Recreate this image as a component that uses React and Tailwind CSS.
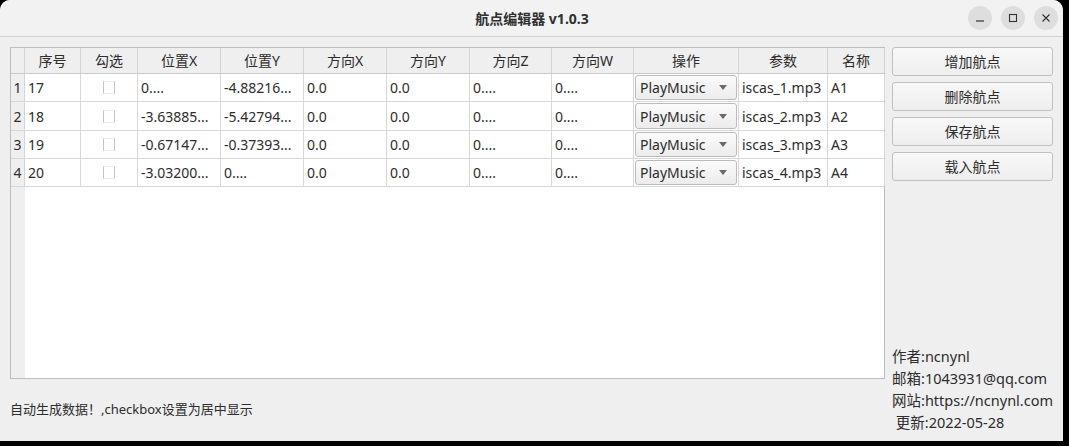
const font = { fontFamily: '"Noto Sans", "Noto Sans CJK SC", sans-serif' }

const cols = [
  { key: 'id', title: '序号', w: 'w-[56px]' },
  { key: 'check', title: '勾选', w: 'w-[57px]' },
  { key: 'px', title: '位置X', w: 'w-[83px]' },
  { key: 'py', title: '位置Y', w: 'w-[83px]' },
  { key: 'ox', title: '方向X', w: 'w-[83px]' },
  { key: 'oy', title: '方向Y', w: 'w-[83px]' },
  { key: 'oz', title: '方向Z', w: 'w-[82px]' },
  { key: 'ow', title: '方向W', w: 'w-[82px]' },
  { key: 'op', title: '操作', w: 'w-[105px]' },
  { key: 'arg', title: '参数', w: 'w-[89px]' },
  { key: 'name', title: '名称', w: 'w-[57px]' },
]

const rows = [
  { h: 'h-[28px]', id: '17', px: '0....', py: '-4.88216...', ox: '0.0', oy: '0.0', oz: '0....', ow: '0....', arg: 'iscas_1.mp3', name: 'A1' },
  { h: 'h-[29px]', id: '18', px: '-3.63885...', py: '-5.42794...', ox: '0.0', oy: '0.0', oz: '0....', ow: '0....', arg: 'iscas_2.mp3', name: 'A2' },
  { h: 'h-[28px]', id: '19', px: '-0.67147...', py: '-0.37393...', ox: '0.0', oy: '0.0', oz: '0....', ow: '0....', arg: 'iscas_3.mp3', name: 'A3' },
  { h: 'h-[28px]', id: '20', px: '-3.03200...', py: '0....', ox: '0.0', oy: '0.0', oz: '0....', ow: '0....', arg: 'iscas_4.mp3', name: 'A4' },
]

function Combo() {
  return (
    <div className="m-[1px] flex-1 flex items-center justify-between rounded-[3px] border border-[#bcbcbc] bg-gradient-to-b from-[#fbfbfb] to-[#ececec] pl-[4px] pr-[9px]">
      <span>PlayMusic</span>
      <svg width="8" height="5" viewBox="0 0 8 5"><path d="M0 0h8L4 5z" fill="#6a6a6a" /></svg>
    </div>
  )
}

function Cell({ col, row }) {
  const base = `${col.w} shrink-0 border-r border-[#d8d8d8] flex items-center`
  if (col.key === 'check') {
    return (
      <div className={`${base} justify-center`}>
        <div className="w-[12px] h-[13px] border-x border-[#c4c4c4] border-y border-y-[#ececec]" />
      </div>
    )
  }
  if (col.key === 'op') {
    return <div className={`${base} items-stretch`}><Combo /></div>
  }
  return (
    <div className={`${base} pl-[3px] overflow-hidden whitespace-nowrap`}>{row[col.key]}</div>
  )
}

function WinBtn({ children }) {
  return (
    <div className="w-[24px] h-[24px] rounded-full bg-[#dedede] flex items-center justify-center">{children}</div>
  )
}

export default function App() {
  return (
    <div className="w-[1069px] h-[446px] bg-black text-[14px] text-[#2c2c2c]" style={font}>
      <div className="w-[1063px] h-[441px] bg-[#efefef] rounded-t-[10px] flex flex-col">
        <div className="h-[37px] shrink-0 flex items-center border-b border-[#d2d2d2] bg-[#f2f2f2] rounded-t-[10px]">
          <div className="flex-1" />
          <div className="font-bold text-[14px] text-[#303030] pl-[6px]">航点编辑器 v1.0.3</div>
          <div className="flex-1 flex justify-end gap-[9px] pr-[5px]">
            <WinBtn>
              <svg width="10" height="10" viewBox="0 0 10 10"><path d="M1 8h8" stroke="#333" strokeWidth="1.2" /></svg>
            </WinBtn>
            <WinBtn>
              <svg width="10" height="10" viewBox="0 0 10 10"><rect x="1.5" y="1.5" width="7" height="7" fill="none" stroke="#333" strokeWidth="1.1" /></svg>
            </WinBtn>
            <WinBtn>
              <svg width="10" height="10" viewBox="0 0 10 10"><path d="M1.5 1.5l7 7M8.5 1.5l-7 7" stroke="#333" strokeWidth="1.1" /></svg>
            </WinBtn>
          </div>
        </div>

        <div className="flex-1 flex pl-[10px] pt-[10px]">
          <div className="w-[875px] flex flex-col">
            <div className="h-[332px] border border-[#bdbdbd] bg-white flex flex-col">
              <div className="h-[26px] shrink-0 flex bg-[#efefef] border-b border-[#c9c9c9]">
                <div className="w-[14px] shrink-0 border-r border-[#d4d4d4]" />
                {cols.map((c) => (
                  <div key={c.key} className={`${c.w} shrink-0 border-r border-[#d4d4d4] flex items-center justify-center`}>
                    {c.title}
                  </div>
                ))}
              </div>
              {rows.map((r, i) => (
                <div key={r.id} className={`${r.h} shrink-0 flex border-b border-[#d8d8d8]`}>
                  <div className="w-[14px] shrink-0 bg-[#efefef] border-r border-[#d4d4d4] flex items-center justify-center">{i + 1}</div>
                  {cols.map((c) => <Cell key={c.key} col={c} row={r} />)}
                </div>
              ))}
              <div className="flex-1 flex">
                <div className="w-[14px] bg-[#efefef]" />
              </div>
            </div>
            <div className="flex-1 flex items-center text-[13px]">自动生成数据！,checkbox设置为居中显示</div>
          </div>

          <div className="ml-[7px] w-[161px] flex flex-col">
            <div className="flex flex-col gap-[6px]">
              {['增加航点', '删除航点', '保存航点', '载入航点'].map((t) => (
                <div key={t} className="h-[29px] rounded-[3px] border border-[#c0c0c0] bg-gradient-to-b from-[#f8f8f8] to-[#eeeeee] flex items-center justify-center">{t}</div>
              ))}
            </div>
            <div className="flex-1" />
            <div className="leading-[22px] pb-[8px] text-[14.5px] whitespace-pre">
              <div>作者:ncnynl</div>
              <div>邮箱:1043931@qq.com</div>
              <div>网站:https://ncnynl.com</div>
              <div> 更新:2022-05-28</div>
            </div>
          </div>
        </div>
      </div>
    </div>
  )
}
